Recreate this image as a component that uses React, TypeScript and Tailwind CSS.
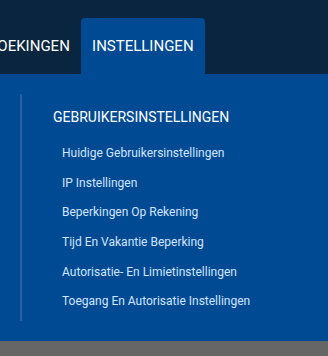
const items = [
  "Huidige Gebruikersinstellingen",
  "IP Instellingen",
  "Beperkingen Op Rekening",
  "Tijd En Vakantie Beperking",
  "Autorisatie- En Limietinstellingen",
  "Toegang En Autorisatie Instellingen",
];

export default function App() {
  return (
    <div
      className="flex h-[356px] w-[328px] flex-col overflow-hidden bg-[#666666]"
      style={{ fontFamily: "Roboto, 'Noto Sans', sans-serif" }}
    >
      {/* top nav */}
      <div className="flex h-[74px] items-end bg-[#0a2540] overflow-hidden">
        <div className="flex h-[56px] shrink-0 items-center ml-[-23px] px-[11px] text-[15px] text-white">
          BOEKINGEN
        </div>
        <div className="flex h-[56px] w-[124px] shrink-0 items-center justify-center rounded-t-[4px] bg-[#004a93] text-[15px] text-white">
          INSTELLINGEN
        </div>
      </div>

      {/* dropdown panel */}
      <div className="h-[267px] bg-[#004a93] pt-[20px] pl-[20px]">
        <div className="h-[227px] border-l-2 border-[#2a5fa0] pl-[31px] pt-[14px]">
          <h3 className="text-[14px] leading-[18px] text-white">
            GEBRUIKERSINSTELLINGEN
          </h3>
          <ul className="mt-[12px] flex flex-col pl-[9px]">
            {items.map((it) => (
              <li
                key={it}
                className="h-[29.7px] flex items-center text-[12px] text-[#d3e5fb]"
              >
                {it}
              </li>
            ))}
          </ul>
        </div>
      </div>
    </div>
  );
}
